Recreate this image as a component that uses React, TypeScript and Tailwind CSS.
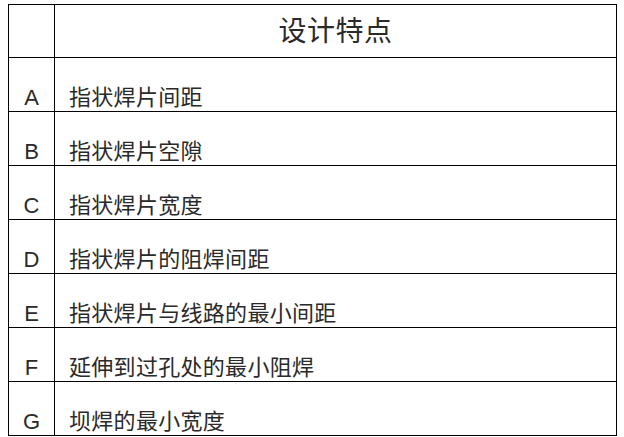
const rows = [
  { key: "A", text: "指状焊片间距" },
  { key: "B", text: "指状焊片空隙" },
  { key: "C", text: "指状焊片宽度" },
  { key: "D", text: "指状焊片的阻焊间距" },
  { key: "E", text: "指状焊片与线路的最小间距" },
  { key: "F", text: "延伸到过孔处的最小阻焊" },
  { key: "G", text: "坝焊的最小宽度" },
];

const cjk = "font-['Liberation_Sans','Noto_Sans_CJK_SC',sans-serif]";

export default function App() {
  return (
    <div className="w-[624px] h-[437px] bg-white pl-[8px] pt-[4px]">
      <table className={`w-[609px] border-collapse text-[#2a2a2a] ${cjk}`}>
        <colgroup>
          <col className="w-[46px]" />
          <col />
        </colgroup>
        <thead>
          <tr className="h-[53px]">
            <th className="border border-black p-0" />
            <th className="border border-black p-0 pt-[1px] text-center align-middle text-[28px] font-normal leading-none tracking-[0.5px]">
              设计特点
            </th>
          </tr>
        </thead>
        <tbody>
          {rows.map((row) => (
            <tr key={row.key} className="h-[54px]">
              <td className="border border-black p-0 pb-[2px] text-center align-bottom text-[22px] leading-none">
                {row.key}
              </td>
              <td className="border border-black p-0 pb-[2px] pl-[14px] align-bottom text-[22px] leading-none tracking-[0.3px]">
                {row.text}
              </td>
            </tr>
          ))}
        </tbody>
      </table>
    </div>
  );
}
